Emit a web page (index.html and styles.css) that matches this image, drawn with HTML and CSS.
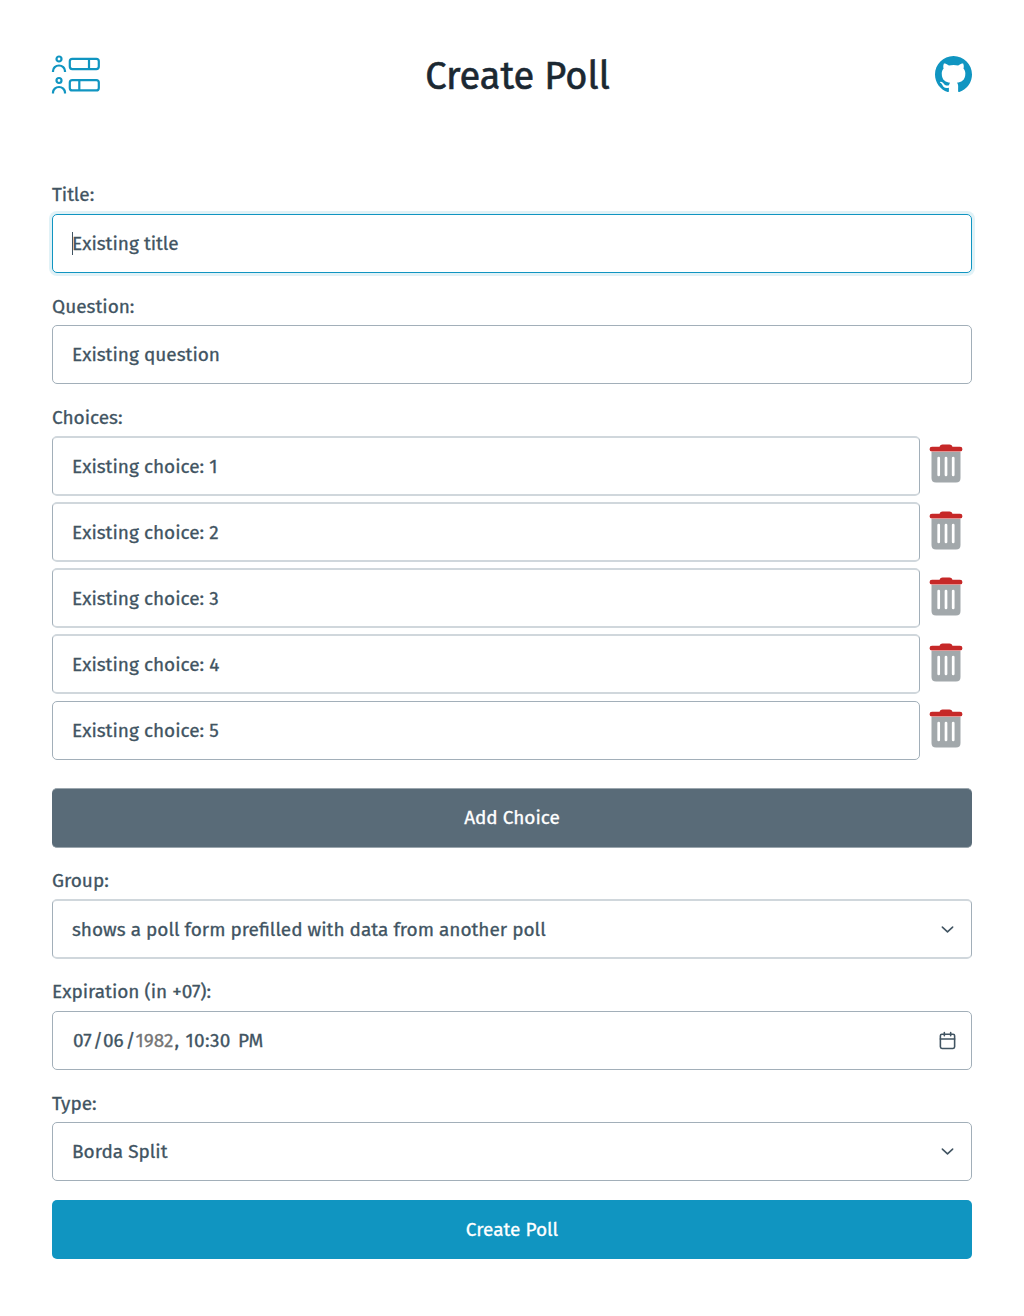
FILE: index.html
```html
<!DOCTYPE html>
<html lang="en">
<head>
<meta charset="utf-8">
<title>Create Poll</title>
<link rel="stylesheet" href="styles.css">
</head>
<body>
<svg class="defs" width="0" height="0" aria-hidden="true">
  <symbol id="trash" viewBox="0 0 34 40">
    <path d="M2.500 8h29v26q0 4.500-4.500 4.500H7q-4.500 0-4.500-4.500z" fill="#a2a8ab"/>
    <path d="M9.700 14v17M17 14v17M24.200 14v17" stroke="#fff" stroke-width="2.700" stroke-linecap="round"/>
    <path d="M3 2.700h7.500q.7-2.300 3-2.300h7q2.300 0 3 2.300H31a2.400 2.400 0 0 1 0 4.900H3A2.400 2.400 0 0 1 3 2.700z" fill="#c62828"/>
  </symbol>
  <symbol id="chevron" viewBox="0 0 24 24">
    <path d="M5.500 9l6.500 6 6.500-6" fill="none" stroke="#415462" stroke-width="2" stroke-linecap="round" stroke-linejoin="round"/>
  </symbol>
</svg>
<header class="top">
  <svg class="logo" viewBox="0 0 50 40" fill="none" stroke="#1095c1" stroke-width="2.200">
    <circle cx="8" cy="4" r="2.500"/><path d="M2 17v-1a6 5.500 0 0 1 12 0v1"/>
    <rect x="18.800" y="3.800" width="29" height="10.300" rx="2.500"/><path d="M38 4v10"/>
    <circle cx="8" cy="25.500" r="2.500"/><path d="M2 38.500v-1a6 5.500 0 0 1 12 0v1"/>
    <rect x="18.800" y="25.100" width="29" height="10.300" rx="2.500"/><path d="M28.300 25v10"/>
  </svg>
  <h1>Create Poll</h1>
  <svg class="github" viewBox="0 0 16 16" fill="#1095c1"><path d="M8 0C3.580 0 0 3.580 0 8c0 3.540 2.290 6.530 5.470 7.590.4.070.55-.17.55-.38 0-.19-.01-.82-.01-1.490-2.010.37-2.530-.49-2.690-.94-.09-.23-.48-.94-.82-1.130-.28-.15-.68-.52-.01-.53.63-.01 1.080.58 1.230.82.72 1.210 1.870.87 2.330.66.07-.52.28-.87.51-1.070-1.780-.2-3.640-.89-3.640-3.950 0-.87.31-1.590.82-2.150-.08-.2-.36-1.020.08-2.120 0 0 .67-.21 2.200.82.64-.18 1.320-.27 2-.27s1.360.09 2 .27c1.530-1.040 2.200-.82 2.200-.82.44 1.100.16 1.920.08 2.120.51.56.82 1.270.82 2.150 0 3.070-1.870 3.750-3.650 3.950.29.25.54.73.54 1.480 0 1.070-.01 1.930-.01 2.200 0 .21.15.46.55.38A8.010 8.010 0 0 0 16 8c0-4.420-3.580-8-8-8z"/></svg>
</header>
<main class="form">
  <div class="label">Title:</div>
  <div class="box focus"><span>Existing title</span></div>
  <div class="label low">Question:</div>
  <div class="box"><span>Existing question</span></div>
  <div class="label low">Choices:</div>
  <div class="choices">
    <div class="row first"><div class="box soft"><span>Existing choice: 1</span></div><svg class="trash"><use href="#trash"/></svg></div>
    <div class="row"><div class="box soft"><span>Existing choice: 2</span></div><svg class="trash"><use href="#trash"/></svg></div>
    <div class="row"><div class="box soft"><span>Existing choice: 3</span></div><svg class="trash"><use href="#trash"/></svg></div>
    <div class="row"><div class="box soft"><span>Existing choice: 4</span></div><svg class="trash"><use href="#trash"/></svg></div>
    <div class="row last"><div class="box"><span>Existing choice: 5</span></div><svg class="trash"><use href="#trash"/></svg></div>
  </div>
  <div class="button secondary"><span>Add Choice</span></div>
  <div class="label low">Group:</div>
  <div class="box soft"><span>shows a poll form prefilled with data from another poll</span><svg class="icon"><use href="#chevron"/></svg></div>
  <div class="label">Expiration (in +07):</div>
  <div class="box">
    <div class="date"><span class="month">07</span><span class="slash">/</span><span class="day">06</span><span class="slash">/</span><span class="year">1982</span><span class="comma">,</span><span class="time">10:30</span><span>PM</span></div>
    <svg class="icon" viewBox="0 0 24 24" fill="none" stroke="#415462" stroke-width="2" stroke-linecap="round"><rect x="3" y="4" width="18" height="18" rx="2"/><path d="M16 2v4M8 2v4M3 10h18"/></svg>
  </div>
  <div class="label low">Type:</div>
  <div class="box"><span>Borda Split</span><svg class="icon"><use href="#chevron"/></svg></div>
  <div class="button primary"><span>Create Poll</span></div>
</main>
</body>
</html>
```
FILE: styles.css
```css
* { box-sizing: border-box; }
body {
  margin: 0;
  padding: 55px 52px 57px;
  background: #fff;
  color: #415462;
  font: 400 19px/28px "Fira Sans", "Noto Sans", sans-serif;
  -webkit-text-stroke: 0.300px currentColor;
  white-space: nowrap;
}
.defs { position: absolute; }
.top { display: flex; justify-content: space-between; height: 126px; align-items: flex-start; }
.logo { width: 50px; height: 40px; margin-left: -1px; }
.github { width: 37px; height: 37px; margin-top: 1px; }
h1 { margin: -3px 1px 0 0; font-size: 38px; line-height: 48px; font-weight: 400; color: #1b2832; -webkit-text-stroke: 0.600px #1b2832; }
.label { height: 28px; margin-bottom: 5px; }
.label.low { padding-top: 1px; }
.box {
  display: flex; align-items: center; justify-content: space-between;
  height: 59px; margin-bottom: 19px; padding: 0 14px 0 19px;
  border: 1px solid #a2afb9; border-radius: 5px;
}
.box.soft { height: 60px; border-top: 2px solid #d0d7dc; border-bottom: 2px solid #d0d7dc; }
.soft span { padding-top: 1px; }
.box.focus { position: relative; border-color: #1095c1; box-shadow: 0 0 0 3px rgba(16, 149, 193, .125); }
.focus::before { content: ""; position: absolute; left: 19px; top: 17px; width: 1px; height: 23px; background: #415462; }
.choices { display: grid; gap: 6px; margin-bottom: 28px; }
.row { display: flex; gap: 9px; }
.row .box { flex: none; width: 868px; margin: 0; }
.row.last { margin-top: 1px; }
.trash { width: 34px; height: 40px; margin-top: 8.500px; }
.row.first .trash, .row.last .trash { margin-top: 8px; }
.button {
  display: flex; align-items: center; justify-content: center;
  height: 59px; border-radius: 5px; color: #fff;
}
.secondary { height: 60px; margin-bottom: 18px; background: #596b78; border: solid #9ba6ae; border-width: 1px 0; }
.primary { background: #1095c1; }
.icon { flex: none; width: 19px; height: 19px; }
.date { display: flex; padding-left: 1px; }
.month { width: 20px; }
.day { width: 22.500px; }
.slash { width: 10px; }
.year { width: 39px; color: #757575; }
.comma { width: 11px; }
.time { width: 52.500px; letter-spacing: 0.300px; }
```
